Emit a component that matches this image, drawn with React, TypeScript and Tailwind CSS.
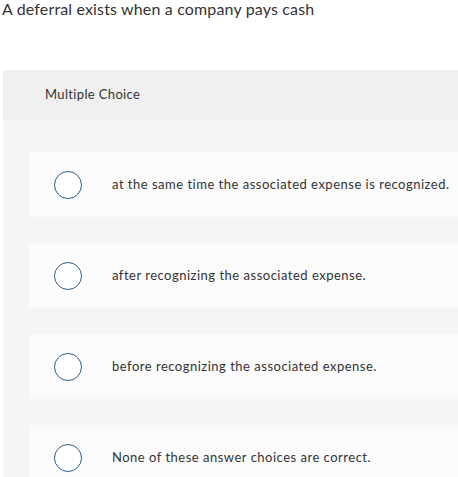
const choices = [
  "at the same time the associated expense is recognized.",
  "after recognizing the associated expense.",
  "before recognizing the associated expense.",
  "None of these answer choices are correct.",
];

function Radio() {
  return (
    <span className="h-[28px] w-[28px] shrink-0 rounded-full border-[1.5px] border-[#2e5d8c] bg-white" />
  );
}

export default function App() {
  return (
    <div className="h-[477px] w-[458px] overflow-hidden bg-white font-['Lato',sans-serif] text-[#333]">
      <h1 className="pl-[2px] text-[16px] leading-[18px] tracking-[0.15px] text-[#333]">
        A deferral exists when a company pays cash
      </h1>

      <div className="ml-[3px] mt-[52px] bg-[#f5f5f5]">
        <div className="flex h-[50px] items-center bg-[#f0f0f0] pl-[42px] text-[13px] tracking-[0.35px] text-[#333]">
          Multiple Choice
        </div>
        <div className="flex flex-col gap-[26px] pl-[26px] pt-[32px]">
          {choices.map((c) => (
            <div key={c} className="flex h-[65px] items-center rounded-l-[3px] bg-[#fbfbfb] pl-[25px]">
              <Radio />
              <span className="ml-[30px] whitespace-nowrap text-[13px] tracking-[0.5px] text-[#333]">{c}</span>
            </div>
          ))}
        </div>
      </div>
    </div>
  );
}
